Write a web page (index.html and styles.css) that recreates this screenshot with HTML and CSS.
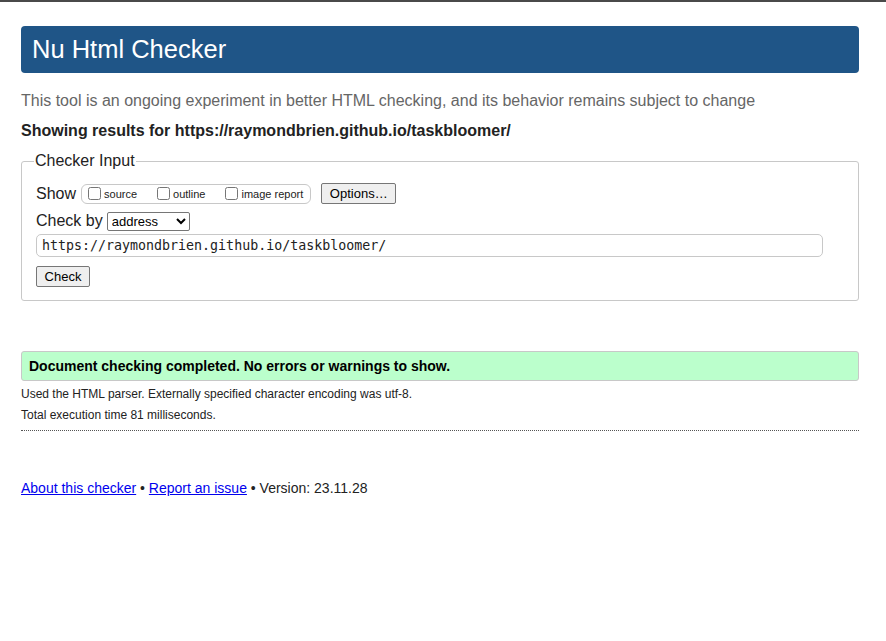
FILE: index.html
```
<!DOCTYPE html>
<html lang="en">
<head>
<meta charset="utf-8">
<title>Showing results for https://raymondbrien.github.io/taskbloomer/ - Nu Html Checker</title>
<link rel="stylesheet" href="styles.css">
</head>
<body>
<div class="page">
  <h1 class="banner">Nu Html Checker</h1>
  <p class="intro">This tool is an ongoing experiment in better HTML checking, and its behavior remains subject to change</p>
  <p class="showing">Showing results for https://raymondbrien.github.io/taskbloomer/</p>
  <fieldset class="input-box">
    <legend class="legend">Checker Input</legend>
    <div class="row row-show">
      <span class="label">Show</span>
      <span class="opts">
        <label class="opt"><input type="checkbox" class="cb"><span>source</span></label>
        <label class="opt"><input type="checkbox" class="cb"><span>outline</span></label>
        <label class="opt"><input type="checkbox" class="cb"><span>image report</span></label>
      </span>
      <button class="btn btn-options">Options…</button>
    </div>
    <div class="row row-by">
      <span class="label">Check by</span>
      <select class="sel"><option>address</option></select>
    </div>
    <div class="row row-url">
      <input class="url" type="text" value="https://raymondbrien.github.io/taskbloomer/">
    </div>
    <div class="row row-check">
      <button class="btn btn-check">Check</button>
    </div>
  </fieldset>
  <p class="success">Document checking completed. No errors or warnings to show.</p>
  <p class="details">Used the HTML parser. Externally specified character encoding was utf-8.</p>
  <p class="details details-2">Total execution time 81 milliseconds.</p>
  <hr class="sep">
  <p class="footer"><a href="#">About this checker</a> • <a href="#">Report an issue</a> • Version: 23.11.28</p>
</div>
</body>
</html>
```
FILE: styles.css
```
html, body {
  margin: 0;
  padding: 0;
  background: #fff;
}
body {
  border-top: 2px solid #4a4a4a;
  font-family: "Liberation Sans", Arial, sans-serif;
  color: #222;
}
.page {
  padding: 0 27px 40px 21px;
}
.banner {
  margin: 24px 0 0 0;
  height: 47px;
  box-sizing: border-box;
  background: #1f5587;
  color: #fff;
  border-radius: 4px;
  font-weight: normal;
  font-size: 25.5px;
  line-height: 47px;
  padding: 0 0 0 11px;
}
.intro {
  margin: 19px 0 0 0;
  font-size: 16px;
  line-height: 18px;
  color: #666;
}
.showing {
  margin: 12px 0 0 0;
  font-size: 16px;
  line-height: 18px;
  font-weight: bold;
  color: #222;
}
.input-box {
  margin: 12px 0 0 0;
  border: 1px solid #c8c8c8;
  border-radius: 3px;
  padding: 13px 14px 13px 14px;
  display: flex;
  flex-direction: column;
}
.legend {
  font-size: 16px;
  line-height: 18px;
  padding: 0 1px;
  margin-left: -2px;
  color: #222;
}
.row {
  display: flex;
  align-items: center;
}
.label {
  font-size: 16px;
  line-height: 18px;
  color: #222;
}
.row-show {
  height: 21px;
}
.opts {
  display: inline-flex;
  align-items: center;
  margin-left: 5px;
  height: 20px;
  box-sizing: border-box;
  border: 1px solid #c8c8c8;
  border-radius: 6px;
  padding: 0 7px 0 6px;
  gap: 20px;
}
.opt {
  display: inline-flex;
  align-items: center;
  font-size: 11px;
  color: #222;
}
.cb {
  width: 13px;
  height: 13px;
  margin: 0 3px 0 0;
}
.btn {
  font-family: "Liberation Sans", Arial, sans-serif;
  font-size: 13px;
  color: #000;
  background: #efefef;
  border: 1px solid #767676;
  border-radius: 2px;
  height: 21px;
  padding: 0 6px;
  box-sizing: border-box;
}
.btn-options {
  margin-left: 10px;
  width: 75px;
}
.row-by {
  margin-top: 7px;
  height: 20px;
}
.sel {
  margin-left: 4px;
  width: 83px;
  height: 19px;
  font-family: "Liberation Sans", Arial, sans-serif;
  font-size: 13px;
  border: 1px solid #767676;
  border-radius: 2px;
  background: #fff;
  color: #000;
  padding: 0;
}
.row-url {
  margin-top: 3px;
}
.url {
  width: 787px;
  height: 23px;
  box-sizing: border-box;
  border: 1px solid #c8c8c8;
  border-radius: 5px;
  padding: 0 5px;
  font-family: "DejaVu Sans Mono", "Liberation Mono", monospace;
  font-size: 13.3px;
  color: #222;
  margin: 0;
}
.row-check {
  margin-top: 9px;
}
.btn-check {
  width: 54px;
}
.success {
  margin: 50px 0 0 0;
  height: 30px;
  box-sizing: border-box;
  background: #bbffcc;
  border: 1px solid #c8c8c8;
  border-radius: 3px;
  font-size: 14px;
  font-weight: bold;
  line-height: 28px;
  padding: 0 0 0 7px;
  color: #000;
}
.details {
  margin: 6px 0 0 0;
  font-size: 12px;
  line-height: 14px;
  color: #222;
}
.details-2 {
  margin-top: 7px;
}
.sep {
  margin: 8px 0 0 0;
  border: 0;
  border-top: 1px dotted #555;
  height: 0;
}
.footer {
  margin: 49px 0 0 0;
  font-size: 14px;
  line-height: 16px;
  color: #222;
}
.footer a {
  color: #0000ee;
  text-decoration: underline;
}
```
